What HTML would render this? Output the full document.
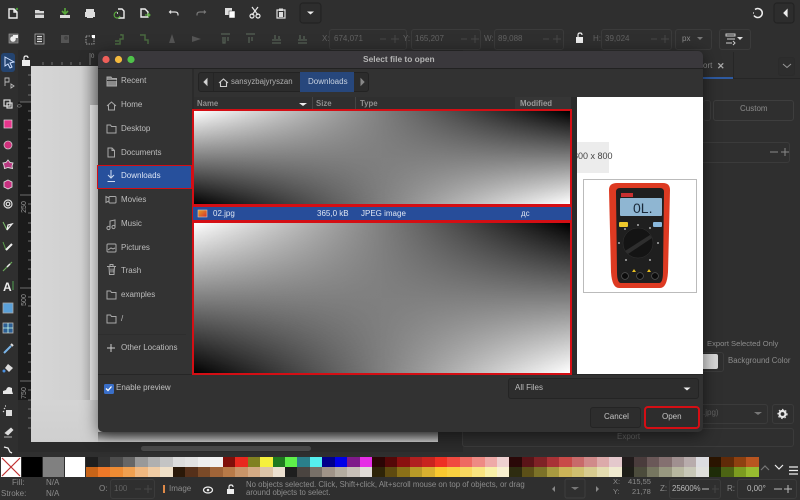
<!DOCTYPE html>
<html><head><meta charset="utf-8"><title>Select file to open</title>
<style>
html,body{margin:0;padding:0;background:#2f2f2f;}
#p{position:relative;width:800px;height:500px;overflow:hidden;background:#2f2f2f;font-family:"Liberation Sans",sans-serif;filter:blur(.35px)}
.a{position:absolute}
.t{position:absolute;white-space:nowrap;font:8px/10px "Liberation Sans",sans-serif;color:#bbb}
.d{color:#626262}
.m{color:#8c8c8c}
.f{position:absolute;border:1px solid #3b3b3b;border-radius:3px;box-sizing:border-box;background:none}
.b{position:absolute;box-sizing:border-box;border:1px solid #232323;border-radius:3px;background:#2d2d2d}
.pal{position:absolute;left:85.5px;width:673px;height:10px;display:flex}
.pal i{flex:1;display:block}
svg{position:absolute;left:0;top:0;overflow:visible}
.bil{position:absolute;box-sizing:border-box;border:2px solid #d40e14;background:linear-gradient(90deg,#fff,#000)}
.bil:after{content:"";position:absolute;inset:0;background:linear-gradient(90deg,#000,#fff);-webkit-mask-image:linear-gradient(#0000,#000);mask-image:linear-gradient(#0000,#000)}
</style></head><body><div id="p">

<!-- canvas -->
<div class="a" style="left:18px;top:50px;width:445px;height:402px;background:#2b2b2b"></div>
<div class="a" style="left:18px;top:102px;width:13px;height:298px;background:#1b1b1b"></div>
<div class="a" style="left:31px;top:66px;width:407px;height:376px;background:linear-gradient(90deg,#d6d6d6 0,#d0d0d0 50px,#a8a8a8 67px)"></div>
<div class="a" style="left:90px;top:105px;width:8px;height:295px;background:#e8e8e8"></div>
<div class="a" style="left:31px;top:400px;width:407px;height:42px;background:linear-gradient(#d4d4d4,#cfcfcf)"></div>
<div class="a" style="left:98px;top:432px;width:340px;height:10px;background:linear-gradient(#6a6a6a,#c8c8c8)"></div>
<div class="a" style="left:141px;top:446px;width:170px;height:5px;border-radius:3px;background:#4a4a4a"></div>
<span class="t" style="left:17px;top:196px;color:#999;font-size:7px;width:16px;text-align:center;transform:rotate(-90deg) translate(-6px,0)">250</span>
<span class="t" style="left:17px;top:289px;color:#999;font-size:7px;width:16px;text-align:center;transform:rotate(-90deg) translate(-6px,0)">500</span>
<span class="t" style="left:17px;top:382px;color:#999;font-size:7px;width:16px;text-align:center;transform:rotate(-90deg) translate(-6px,0)">750</span>
<span class="t" style="left:91px;top:52px;color:#999;font-size:6px">0</span>
<span class="t" style="left:19px;top:101px;color:#999;font-size:6px;transform:rotate(-90deg)">0</span>

<svg width="800" height="500" fill="none" stroke="#cfcfcf" stroke-width="1.2">
<!-- rulers -->
<g stroke="#8a8a8a" stroke-width=".7">
<path d="M43 65V62M52 65V62M62 65V62M71 65V62M80 65V62M90 65V53"/>
<path d="M28 75h3M28 85h3M28 95h3M20 102h11M28 111h3M28 120h3M28 130h3M28 139h3M28 148h3M28 158h3M28 167h3M28 176h3M28 186h3M20 195h11M28 204h3M28 213h3M28 223h3M28 232h3M28 241h3M28 251h3M28 260h3M28 269h3M28 279h3M20 288h11M28 297h3M28 306h3M28 316h3M28 325h3M28 334h3M28 344h3M28 353h3M28 362h3M28 372h3M20 381h11M28 390h3M28 400h3M28 409h3M28 418h3M28 428h3"/>
</g>
<rect x="22" y="60" width="8" height="6" fill="#eee" stroke="none"/><path d="M24 60v-2q0-2 2-2t2 2" stroke="#eee"/>
<!-- top toolbar -->
<path d="M9 9h5l3 3v6H9zM14 9v3h3" stroke="#eee" stroke-width="1.4"/><circle cx="17" cy="9" r="1.2" fill="#4a9a3a" stroke="none"/>
<path d="M35 10h4l1 1h4v7h-9z" fill="#d8d8d8" stroke="none"/><path d="M35 14h9" stroke="#333"/>
<path d="M65 8v5M62 11l3 3 3-3" stroke="#59a83c" stroke-width="1.6"/><path d="M60 15h10v3H60z" fill="#ddd" stroke="none"/>
<path d="M86 9h8v3h-8zM85 12h10v5H85zM87 15h6v3h-6z" fill="#ddd" stroke="none"/>
<path d="M118 9h4l2 2v7h-6M118 13h-1" stroke="#eee" stroke-width="1.4"/><path d="M120 16a3 3 0 1 1-3-4" stroke="#59a83c" stroke-width="1.2"/>
<path d="M141 17V9h4l3 3v5z" stroke="#eee" stroke-width="1.4"/><path d="M145 15h5M148 13l2 2-2 2" stroke="#59a83c" stroke-width="1.2"/>
<path d="M171 10.500l-1.500 1.500 1.500 1.500M170 12h5q3 0 3 2.500v1" stroke="#ddd"/>
<path d="M204 10.500l1.500 1.500-1.500 1.500M205 12h-5q-3 0-3 2.500v1" stroke="#777"/>
<rect x="225" y="8" width="7" height="7" fill="#ddd" stroke="none"/><rect x="229" y="11" width="6" height="7" fill="#fff" stroke="#2f2f2f" stroke-width=".5"/>
<path d="M252 7l6 8M258 7l-6 8" stroke="#e8e8e8"/><circle cx="252" cy="16" r="2" stroke="#e8e8e8"/><circle cx="258" cy="16" r="2" stroke="#e8e8e8"/>
<path d="M277 10h8v8h-8z" stroke="#ddd"/><rect x="279" y="12" width="4" height="5" fill="#ddd" stroke="none"/><rect x="279" y="8.500" width="4" height="2.500" fill="#ddd" stroke="none"/>
<rect x="300" y="3" width="21" height="20" rx="3" fill="#2d2d2d" stroke="#232323"/><path d="M307 11.500h7l-3.500 3z" fill="#eee" stroke="none"/>
<!-- right top -->
<path d="M755 9.500a4.500 4.500 0 1 1-1 6" stroke="#eee" stroke-width="1.5"/><path d="M754 13h-1" stroke="#eee"/>
<rect x="774" y="3" width="20" height="20" rx="3" fill="#2d2d2d" stroke="#232323"/><path d="M787 10v6l-3-3z" fill="#eee" stroke="#eee"/>
<!-- row 2 -->
<rect x="9" y="34" width="9" height="9" fill="#666" stroke="#999" stroke-width=".7"/><circle cx="13" cy="39" r="2.800" fill="#eee" stroke="none"/><rect x="13" y="35" width="5" height="3" fill="#eee" stroke="none"/>
<rect x="35" y="34" width="9" height="10" stroke="#aaa" stroke-width=".8"/><path d="M37 36.500h5M37 39h5M37 41.500h5" stroke="#ddd"/>
<rect x="61" y="35" width="8" height="8" fill="#555" stroke="none"/><circle cx="66" cy="38" r="2" fill="#444" stroke="none"/>
<rect x="86" y="36" width="8" height="8" stroke="#bbb" stroke-dasharray="1.500 1" stroke-width=".8"/><rect x="92" y="35" width="3" height="3" fill="#fff" stroke="none"/>
<path d="M115 44h5v-5h3v-4h-2v-1M115 41h4" stroke="#4a6a40" stroke-width="1.500"/><path d="M140 35h5v5h3v4" stroke="#4a6a40" stroke-width="1.500"/>
<path d="M172 34l-3 9h6z" fill="#555" stroke="none"/><path d="M192 36l9 3-9 3z" fill="#555" stroke="none"/>
<g stroke="#566256" stroke-width="1.300"><path d="M221 34h9M223 37v6h2v-6M228 37v4M246 34h9M249 37v6M252 37v4M272 40h9M275 35v4M279 36v3M272 43h9M298 40h9M300 35v4M304 36v3M298 43h9"/></g>
<!-- left tools -->
<rect x="1" y="53" width="14" height="19" rx="3" fill="#244470" stroke="none"/>
<path d="M5 57l9 5-4 1 2 4-2 1-2-4-3 2z" stroke="#cfe0ff" stroke-width="1"/>
<path d="M5 78h4v4H5zM5 82v4M11 84l3 2-3 2z" stroke="#bbb" stroke-width=".9"/>
<rect x="4" y="100" width="6" height="6" stroke="#ddd"/><rect x="7" y="103" width="5" height="5" stroke="#ddd"/>
<rect x="4" y="120" width="8" height="8" fill="#e8358c" stroke="#ddd" stroke-width=".7"/>
<circle cx="8" cy="145" r="4" fill="#d0307c" stroke="#ccc" stroke-width=".8"/>
<path d="M8 160l2 2.500 3 .5-1 3 .5 2.500-4.500-1-3.500 1-.5-3-1-2.500 3-.5z" fill="#b83880" stroke="#ddd" stroke-width=".9"/>
<path d="M8 180l4 2v5l-4 2-4-2v-5z" fill="#c83080" stroke="#ddd" stroke-width=".9"/>
<circle cx="8" cy="204" r="4" stroke="#ddd"/><circle cx="8" cy="204" r="1.800" stroke="#ddd"/>
<path d="M3 222l4 8" stroke="#7cc06c" stroke-width="1"/><path d="M7 230l5-6-4 1z" stroke="#eee" stroke-width="1.300"/>
<path d="M3 242l3 8" stroke="#5aa04a" stroke-width="1"/><path d="M6 250l6-6" stroke="#eee" stroke-width="2"/>
<path d="M3 271l9-9" stroke="#6aa85a" stroke-width="1.200"/><path d="M7 267l3-3" stroke="#eee" stroke-width="1.500"/>
<path d="M13 281v9" stroke="#4a8a4a"/>
<rect x="3" y="303" width="10" height="10" fill="#5aa0d8" stroke="#aaa" stroke-width=".8"/>
<rect x="3" y="323" width="10" height="10" fill="#2c5f94" stroke="#bbb" stroke-width=".8"/><path d="M8 323v10M3 328h10" stroke="#cfe" stroke-width=".8"/>
<path d="M4 353l7-7" stroke="#7ab4e8" stroke-width="2"/><path d="M11 344l2 2" stroke="#ddd" stroke-width="2"/>
<path d="M8 364l5 4-4 4-4-4z" fill="#ddd" stroke="none"/><circle cx="4" cy="371" r="1.500" fill="#4a90e0" stroke="none"/>
<path d="M3 394v-3l3-1q1-3 3-3l3 1v3l1 3z" fill="#e8e8e8" stroke="none"/>
<path d="M5 408l-1 1M4 411l-1 1M6 406h-1" stroke="#ddd"/><rect x="6" y="410" width="6" height="6" fill="#ddd" stroke="none"/>
<path d="M5 433l6-5 2 2-5 5zM4 437h8" stroke="#ddd" fill="#ddd" stroke-width=".7"/>
<path d="M4 447l4 1 2 4 2 1" stroke="#eee" stroke-width="1.300"/>
<!-- status icons -->
<ellipse cx="208" cy="490" rx="4.500" ry="3" stroke="#eee" stroke-width="1.300"/><circle cx="208" cy="490" r="1.300" fill="#eee" stroke="none"/>
<rect x="227" y="489" width="7" height="5" fill="#eee" stroke="none"/><path d="M229 489v-2q0-2 2-2t2 2" stroke="#eee"/>
<path d="M555 486v6l-3-3z" fill="#888" stroke="none"/><path d="M596 486v6l3-3z" fill="#888" stroke="none"/>
<rect x="565" y="479" width="20" height="19" rx="2" stroke="#3c3c3c"/><path d="M571 487h8l-4 3z" fill="#777" stroke="none"/>
<path d="M761 470l4-4 4 4" stroke="#777"/><path d="M775 465l4 4 4-4" stroke="#eee"/><path d="M789 467h9M789 470.500h9M789 474h9" stroke="#eee" stroke-width="1.300"/>
<!-- row 2 right icon -->
<path d="M726 34h9v2h-9zM727 39h8M726 43h6M733 41l2 2-2 2" stroke="#ccc" stroke-width="1"/><path d="M737 37h6l-3 3z" fill="#ddd" stroke="none"/>
<path d="M697 37h6l-3 3z" fill="#777" stroke="none"/>
<rect x="576" y="37" width="7" height="6" fill="#eee" stroke="none"/><path d="M578 37v-2q0-2 2-2t2 2" stroke="#eee"/>
</svg>
<span class="t" style="left:3px;top:281px;font-size:12px;line-height:12px;font-weight:bold;color:#eee">A</span>

<!-- top inputs -->
<div class="f" style="left:329px;top:29px;width:78px;height:21px"></div>
<div class="f" style="left:411px;top:29px;width:70px;height:21px"></div>
<div class="f" style="left:494px;top:29px;width:70px;height:21px"></div>
<div class="f" style="left:601px;top:29px;width:71px;height:21px"></div>
<div class="f" style="left:675px;top:29px;width:37px;height:21px"></div>
<div class="f" style="left:719px;top:29px;width:32px;height:21px"></div>
<span class="t d" style="left:322px;top:34px">X:</span><span class="t d" style="left:334px;top:34px">674,071</span>
<span class="t d" style="left:403px;top:34px">Y:</span><span class="t d" style="left:415px;top:34px">165,207</span>
<span class="t d" style="left:484px;top:34px">W:</span><span class="t d" style="left:498px;top:34px">89,088</span>
<span class="t d" style="left:593px;top:34px">H:</span><span class="t d" style="left:605px;top:34px">39,024</span>
<span class="t m" style="left:682px;top:34px">px</span>
<svg width="800" height="500" stroke="#474747" fill="none"><path d="M380 39h6M391 39h8M395 35v8M461 39h6M471 39h8M475 35v8M543 39h6M553 39h8M557 35v8M651 39h6M661 39h8M665 35v8"/></svg>

<!-- right panel -->
<div class="a" style="left:703px;top:78px;width:97px;height:1px;background:#262626"></div>
<div class="a" style="left:703px;top:52px;width:30px;height:26px;border-right:1px solid #262626"></div>
<div class="a" style="left:703px;top:77px;width:30px;height:1.500px;background:#2e5aa0"></div>
<span class="t m" style="left:703px;top:61px">ort</span><span class="t" style="left:717px;top:61px;font-weight:bold;font-size:9px;color:#aaa">✕</span>
<div class="b" style="left:778px;top:57px;width:17px;height:19px;border-color:#2b2b2b"></div>
<svg width="800" height="500" fill="none" stroke="#999"><path d="M783 64l4 3.500 4-3.500"/></svg>
<div class="f" style="left:703px;top:100px;width:8px;height:21px;border-left:0"></div>
<div class="f" style="left:713px;top:100px;width:81px;height:21px;border-color:#3e3e3e"></div>
<span class="t m" style="left:740px;top:104px">Custom</span>
<div class="f" style="left:690px;top:142px;width:100px;height:21px"></div>
<svg width="800" height="500" fill="none" stroke="#888"><path d="M770 152h8M781 152h8M785 148v8"/></svg>
<span class="t m" style="left:707px;top:339px;font-size:7.600px">Export Selected Only</span>
<div class="f" style="left:690px;top:352px;width:34px;height:20px"></div>
<div class="a" style="left:703px;top:354px;width:15px;height:15px;border-radius:0 2px 2px 0;background:#d8d8d8"></div>
<span class="t m" style="left:728px;top:356px;font-size:7.800px">Background Color</span>
<div class="f" style="left:690px;top:404px;width:78px;height:20px"></div>
<span class="t d" style="left:703px;top:408px">.jpg)</span>
<svg width="800" height="500"><path d="M754 412h8l-4 3z" fill="#777"/></svg>
<div class="f" style="left:772px;top:404px;width:22px;height:20px"></div>
<svg width="800" height="500"><circle cx="782.500" cy="414" r="3" fill="none" stroke="#e8e8e8" stroke-width="2.200"/><circle cx="782.500" cy="414" r="4.600" fill="none" stroke="#e8e8e8" stroke-width="1" stroke-dasharray="1.500 2"/></svg>
<div class="f" style="left:462px;top:428px;width:332px;height:19px"></div>
<span class="t d" style="left:617px;top:432px">Export</span>

<!-- palette -->
<div class="a" style="left:1px;top:457px;width:20px;height:20px;background:#fff"></div>
<svg width="800" height="500"><path d="M2 458l18 18M20 458L2 476" stroke="#c03030" stroke-width="1.200"/></svg>
<div class="a" style="left:22px;top:457px;width:20px;height:20px;background:#000"></div>
<div class="a" style="left:43px;top:457px;width:21px;height:20px;background:#808080"></div>
<div class="a" style="left:65px;top:457px;width:20px;height:20px;background:#fff"></div>
<div class="pal" style="top:457px">
<i style="background:#1e1e1e"></i><i style="background:#333"></i><i style="background:#4d4d4d"></i><i style="background:#666"></i><i style="background:#999"></i><i style="background:#b0b0b0"></i><i style="background:#c4c4c4"></i><i style="background:#dcdcdc"></i><i style="background:#e2e2e2"></i><i style="background:#eee"></i><i style="background:#f2f2f2"></i><i style="background:#7f0f0a"></i><i style="background:#e8281e"></i><i style="background:#808020"></i><i style="background:#f5f03c"></i><i style="background:#1f7a1f"></i><i style="background:#5ef04a"></i><i style="background:#2a7f8a"></i><i style="background:#55f0f0"></i><i style="background:#00008a"></i><i style="background:#0000e8"></i><i style="background:#7f1a8a"></i><i style="background:#e62ee6"></i><i style="background:#2b0505"></i><i style="background:#550808"></i><i style="background:#8a1010"></i><i style="background:#b02020"></i><i style="background:#c8241f"></i><i style="background:#ee3024"></i><i style="background:#f04a40"></i><i style="background:#ee6a62"></i><i style="background:#ee8a84"></i><i style="background:#eeaaa8"></i><i style="background:#eed0d0"></i><i style="background:#2a0808"></i><i style="background:#5a1418"></i><i style="background:#7f2226"></i><i style="background:#a83236"></i><i style="background:#c84a48"></i><i style="background:#c86a6a"></i><i style="background:#d08a8a"></i><i style="background:#dcaaaa"></i><i style="background:#e4c8cc"></i><i style="background:#221c1c"></i><i style="background:#4a3c3c"></i><i style="background:#6a5858"></i><i style="background:#847070"></i><i style="background:#a09090"></i><i style="background:#b8acac"></i><i style="background:#dcdce0"></i><i style="background:#2a1400"></i><i style="background:#602a08"></i><i style="background:#8e4010"></i><i style="background:#b85520"></i>
</div>
<div class="pal" style="top:467px">
<i style="background:#c86418"></i><i style="background:#ee7828"></i><i style="background:#ee8c34"></i><i style="background:#f0a050"></i><i style="background:#f0b880"></i><i style="background:#f0cca4"></i><i style="background:#f0e0c8"></i><i style="background:#2a1808"></i><i style="background:#55301a"></i><i style="background:#7a4a28"></i><i style="background:#a06438"></i><i style="background:#b87a48"></i><i style="background:#c89468"></i><i style="background:#d4aa84"></i><i style="background:#dcc4a8"></i><i style="background:#ece0d0"></i><i style="background:#1e1e1e"></i><i style="background:#4a4440"></i><i style="background:#787068"></i><i style="background:#a09488"></i><i style="background:#b4aca0"></i><i style="background:#c8c0b8"></i><i style="background:#e0dcd8"></i><i style="background:#2e2408"></i><i style="background:#5e4a10"></i><i style="background:#8a7018"></i><i style="background:#b89a28"></i><i style="background:#d8b030"></i><i style="background:#f8c830"></i><i style="background:#f8d040"></i><i style="background:#f8d860"></i><i style="background:#f8e480"></i><i style="background:#f8f0a8"></i><i style="background:#f8f0d0"></i><i style="background:#2e2c10"></i><i style="background:#5c5018"></i><i style="background:#7c7228"></i><i style="background:#a89a40"></i><i style="background:#ccb458"></i><i style="background:#d0c070"></i><i style="background:#d8cc90"></i><i style="background:#e4dcb0"></i><i style="background:#f0ead0"></i><i style="background:#1e1e18"></i><i style="background:#4c4c3c"></i><i style="background:#767660"></i><i style="background:#989880"></i><i style="background:#b8b8a0"></i><i style="background:#c8c8b8"></i><i style="background:#e0e0dc"></i><i style="background:#1e2c08"></i><i style="background:#4c6414"></i><i style="background:#7c9c20"></i><i style="background:#98bc30"></i>
</div>

<!-- status -->
<span class="t m" style="left:12px;top:478px">Fill:</span><span class="t m" style="left:46px;top:478px">N/A</span>
<span class="t m" style="left:1px;top:489px">Stroke:</span><span class="t m" style="left:46px;top:489px">N/A</span>
<span class="t m" style="left:99px;top:484px">O:</span>
<div class="f" style="left:110px;top:479px;width:45px;height:20px"></div>
<span class="t d" style="left:114px;top:484px">100</span>
<svg width="800" height="500" fill="none" stroke="#474747"><path d="M135 489h6M144 489h8M148 485v8"/></svg>
<div class="a" style="left:163px;top:485px;width:2px;height:8px;background:#e08a48"></div>
<span class="t m" style="left:169px;top:484px">Image</span>
<span class="t m" style="left:246px;top:481px;line-height:8px;font-size:7.800px">No objects selected. Click, Shift+click, Alt+scroll mouse on top of objects, or drag<br>around objects to select.</span>
<span class="t m" style="left:613px;top:477px;font-size:7.500px">X:</span><span class="t m" style="left:628px;top:477px;font-size:7.500px">415,55</span>
<span class="t m" style="left:613px;top:487px;font-size:7.500px">Y:</span><span class="t m" style="left:632px;top:487px;font-size:7.500px">21,78</span>
<span class="t m" style="left:660px;top:484px">Z:</span>
<div class="f" style="left:669px;top:479px;width:52px;height:20px"></div>
<span class="t" style="left:672px;top:484px;font-size:7.800px">25600%</span>
<span class="t m" style="left:727px;top:484px">R:</span>
<div class="f" style="left:737px;top:479px;width:60px;height:20px"></div>
<span class="t" style="left:747px;top:484px">0,00°</span>
<svg width="800" height="500" fill="none" stroke="#bbb"><path d="M702 489h7" /><path d="M712 489h7M715 485v8" stroke="#444"/><path d="M774 489h8M784 489h8M788 485v8"/></svg>

<!-- DIALOG -->
<div class="a" style="left:98px;top:51px;width:605px;height:381px;background:#323232;border-radius:5px;box-shadow:0 3px 16px rgba(0,0,0,.55);overflow:hidden">
  <div class="a" style="left:0;top:0;width:605px;height:17px;background:#3a383c;border-bottom:1px solid #222"></div>
  <div class="a" style="left:0;top:18px;width:94px;height:305px;background:#333"></div>
  <div class="a" style="left:0;top:283px;width:88px;height:1px;background:#2e2e2e"></div>
  <div class="a" style="left:94px;top:18px;width:2px;height:305px;background:#2b2b2b"></div>
  <div class="a" style="left:0;top:323px;width:605px;height:1px;background:#262626"></div>
  <div class="a" style="left:96px;top:46px;width:377px;height:12px;background:#2f2f2f"></div>
  <div class="a" style="left:473px;top:46px;width:6px;height:277px;background:#2b2b2b"></div>
  <div class="a" style="left:479px;top:46px;width:126px;height:277px;background:#fff"></div>
  <div class="a" style="left:479px;top:91px;width:32px;height:31px;background:#ececec"></div>
</div>
<svg width="800" height="500">
<circle cx="106" cy="59.500" r="3.600" fill="#ef5f5a"/><circle cx="118.500" cy="59.500" r="3.600" fill="#f4b93e"/><circle cx="131" cy="59.500" r="3.600" fill="#4fc24a"/>
</svg>
<span class="t" style="left:363px;top:54px;font-weight:bold;font-size:8.400px;color:#b4b4b4">Select file to open</span>

<!-- path bar -->
<div class="b" style="left:198px;top:72px;width:171px;height:20px;background:#2c2c2c"></div>
<div class="a" style="left:213px;top:73px;width:1px;height:18px;background:#252525"></div>
<div class="a" style="left:300px;top:72px;width:54px;height:20px;background:#27477c"></div>
<span class="t" style="left:231px;top:77px;color:#b0b0b0;font-size:7.800px">sansyzbajyryszan</span>
<span class="t" style="left:308px;top:77px;color:#c8d2e0">Downloads</span>
<svg width="800" height="500" fill="none" stroke="#ccc">
<path d="M207 79v6l-3-3z" fill="#ddd"/><path d="M361 79v6l3-3z" fill="#888" stroke="#888"/>
<path d="M219 83l4.500-4 4.500 4M220.500 82v4.500h6V82" stroke-width="1.100"/>
</svg>

<!-- header -->
<div class="a" style="left:515px;top:97px;width:56px;height:12px;background:#363636"></div>
<span class="t" style="left:197px;top:99px;color:#8f8f8f;font-weight:bold;font-size:7.800px">Name</span>
<span class="t" style="left:316px;top:99px;color:#8f8f8f;font-weight:bold;font-size:7.800px">Size</span>
<span class="t" style="left:360px;top:99px;color:#8f8f8f;font-weight:bold;font-size:7.800px">Type</span>
<span class="t" style="left:520px;top:99px;color:#9a9a9a;font-weight:bold;font-size:7.800px">Modified</span>
<svg width="800" height="500"><path d="M299 103h8l-4 3z" fill="#eee"/><path d="M312.500 97v12M355.500 97v12" stroke="#444"/></svg>

<!-- file list -->
<div class="bil" style="left:192px;top:109px;width:380px;height:97px"></div>
<div class="a" style="left:192px;top:206px;width:380px;height:15px;background:#274d9a;border:1.500px solid #d40e14;box-sizing:border-box;border-top-width:1px"></div>
<div class="bil" style="left:192px;top:220.500px;width:380px;height:154px"></div>
<svg width="800" height="500"><defs><linearGradient id="g" x1="0" y1="0" x2="1" y2="1"><stop offset="0" stop-color="#e8a020"/><stop offset="1" stop-color="#d03030"/></linearGradient></defs><rect x="198" y="210" width="9" height="7" fill="url(#g)" stroke="#ccc" stroke-width=".6"/></svg>
<span class="t" style="left:213px;top:209px;color:#dfe6f2">02.jpg</span>
<span class="t" style="left:317px;top:209px;color:#dfe6f2">365,0 kB</span>
<span class="t" style="left:361px;top:209px;color:#dfe6f2">JPEG image</span>
<span class="t" style="left:521px;top:209px;color:#dfe6f2;font-family:'Liberation Sans','DejaVu Sans',sans-serif">дс</span>

<!-- sidebar -->
<div class="a" style="left:97px;top:165px;width:95px;height:24px;background:#27509c;border:1.500px solid #d40e14;box-sizing:border-box"></div>
<span class="t" style="left:121px;top:76px;color:#bdbdbd">Recent</span>
<span class="t" style="left:121px;top:100px;color:#bdbdbd">Home</span>
<span class="t" style="left:121px;top:124px;color:#bdbdbd">Desktop</span>
<span class="t" style="left:121px;top:148px;color:#bdbdbd">Documents</span>
<span class="t" style="left:121px;top:171px;color:#dbe4f4">Downloads</span>
<span class="t" style="left:121px;top:195px;color:#bdbdbd">Movies</span>
<span class="t" style="left:121px;top:219px;color:#bdbdbd">Music</span>
<span class="t" style="left:121px;top:243px;color:#bdbdbd">Pictures</span>
<span class="t" style="left:121px;top:266px;color:#bdbdbd">Trash</span>
<span class="t" style="left:121px;top:290px;color:#bdbdbd">examples</span>
<span class="t" style="left:121px;top:314px;color:#bdbdbd">/</span>
<span class="t" style="left:121px;top:343px;color:#bdbdbd">Other Locations</span>
<svg width="800" height="500" fill="none" stroke="#a8a8a8" stroke-width="1">
<path d="M107 77h4l1 1.500h4.500V86H107z" fill="#8a8a8a"/><path d="M107 80.500h9.500" stroke="#333"/>
<path d="M107 106l4.500-4 4.500 4M108.500 105v5h6v-5"/>
<path d="M107 125h3.500l1 1.500h4.500v6.500h-9z"/>
<path d="M108 148h4l2.500 2.500v6.500H108zM112 148v2.500h2.500"/>
<path d="M111 170v8M108 175l3 3 3-3M107.500 181.500h7.500" stroke="#cfdcf0"/>
<rect x="109" y="196.500" width="7" height="6.500" rx="1"/><path d="M109 198l-3-1.500v6l3-1.500"/>
<circle cx="108.500" cy="228" r="1.600"/><circle cx="113.500" cy="227" r="1.600"/><path d="M110 228v-7l5-1v7"/>
<rect x="107" y="244" width="9" height="8" rx="1"/><path d="M108 250l3-2 2 1 2-1"/>
<path d="M107 266.500h9M109 266.500l.5 8h4.500l.5-8M110 266v-1.500h3v1.500M111 268.500v4M113 268.500v4"/>
<path d="M107 291h3.500l1 1.500h4.500v6.500h-9z"/>
<path d="M107 315h3.500l1 1.500h4.500v6.500h-9z"/>
<path d="M107 348h8M111 344v8" stroke="#ccc"/>
</svg>

<!-- footer -->
<div class="a" style="left:104px;top:384px;width:9.500px;height:9.500px;background:#3a6fc9;border-radius:1.500px"></div>
<svg width="800" height="500" fill="none"><path d="M106 388.500l2 2 3.500-4" stroke="#fff" stroke-width="1.300"/></svg>
<span class="t" style="left:116px;top:383px;color:#c0c0c0">Enable preview</span>
<div class="a" style="left:508px;top:378px;width:191px;height:21px;background:#2d2d2d;border:1px solid #242424;border-radius:3px;box-sizing:border-box"></div>
<span class="t" style="left:515px;top:383px;color:#bdbdbd">All Files</span>
<svg width="800" height="500"><path d="M683.500 387.500h7l-3.500 3z" fill="#eee"/></svg>
<div class="a" style="left:590px;top:407px;width:51px;height:21px;background:#2d2d2d;border:1px solid #242424;border-radius:3px;box-sizing:border-box"></div>
<span class="t" style="left:604px;top:412px;color:#c4c4c4">Cancel</span>
<div class="a" style="left:644px;top:406px;width:56px;height:23px;background:#2d2d2d;border:2px solid #d40e14;border-radius:4px;box-sizing:border-box"></div>
<span class="t" style="left:662px;top:412px;color:#c4c4c4">Open</span>

<!-- preview -->
<div class="a" style="left:577px;top:148px;width:60px;height:16px;overflow:hidden"><span class="t" style="left:-4px;top:3px;color:#444;font-size:9px">800 x 800</span></div>
<div class="a" style="left:583px;top:179px;width:114px;height:114px;border:1px solid #bbb;box-sizing:border-box;background:#fff"></div>
<svg width="800" height="500">
<path d="M617 183h46q7 0 7 7l-2 82q-1 16-8 16h-41q-7 0-8-16l-2-82q0-7 8-7z" fill="#dd3a22"/>
<path d="M620 188h40q4 0 4 4l-1 80q0 11-4 11h-38q-4 0-4-11l-1-80q0-4 4-4z" fill="#1f1f1f"/>
<rect x="620" y="198" width="42" height="18" rx="1" fill="#8fb6d2"/>
<rect x="621" y="193" width="12" height="4" fill="#c83030"/>
<rect x="619" y="222" width="9" height="5" rx="1" fill="#eec82c"/><rect x="653" y="222" width="9" height="5" rx="1" fill="#8ab8dc"/>
<circle cx="638" cy="243" r="15" fill="#141414" stroke="#333" stroke-width=".5"/>
<path d="M625 251l25-16 2 3-24 16z" fill="#2e2e2e"/>
<circle cx="625" cy="276" r="3.400" fill="#0c0c0c" stroke="#555" stroke-width=".7"/><circle cx="640" cy="276" r="3.400" fill="#0c0c0c" stroke="#555" stroke-width=".7"/><circle cx="655" cy="276" r="3.400" fill="#0c0c0c" stroke="#555" stroke-width=".7"/>
<path d="M632 272l2-3 2 3zM647 272l2-3 2 3z" fill="#e8c020"/>
<circle cx="658" cy="243" r="1" fill="#aaa"/><circle cx="619" cy="243" r="1" fill="#aaa"/><circle cx="625" cy="229" r="1" fill="#aaa"/><circle cx="650" cy="228" r="1" fill="#aaa"/><circle cx="638" cy="225" r="1" fill="#aaa"/><circle cx="626" cy="260" r="1" fill="#aaa"/><circle cx="650" cy="260" r="1" fill="#aaa"/>
<text x="633" y="213" font-family="Liberation Sans,sans-serif" font-size="14" fill="#1a2a3a">0L.</text>
</svg>

</div></body></html>
